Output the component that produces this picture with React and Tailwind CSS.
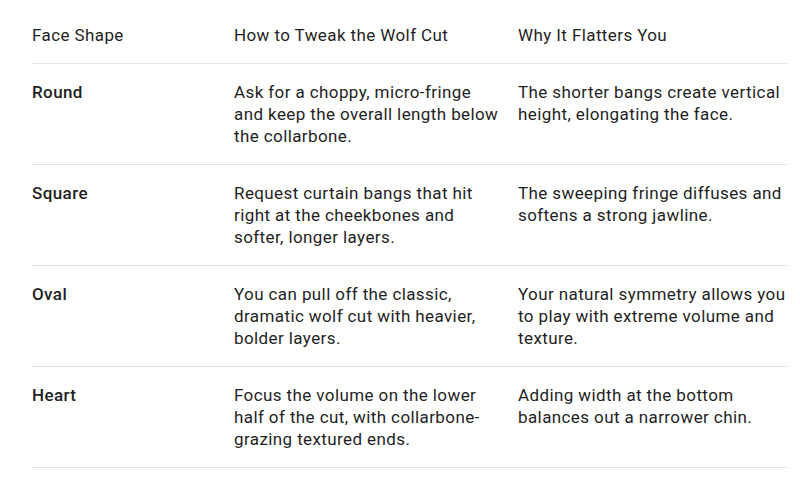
export default function App() {
  const rows = [
    ["Round", "Ask for a choppy, micro-fringe and keep the overall length below the collarbone.", "The shorter bangs create vertical height, elongating the face."],
    ["Square", "Request curtain bangs that hit right at the cheekbones and softer, longer layers.", "The sweeping fringe diffuses and softens a strong jawline."],
    ["Oval", "You can pull off the classic, dramatic wolf cut with heavier, bolder layers.", "Your natural symmetry allows you to play with extreme volume and texture."],
    ["Heart", "Focus the volume on the lower half of the cut, with collarbone-grazing textured ends.", "Adding width at the bottom balances out a narrower chin."],
  ];
  return (
    <div className="w-[800px] h-[481px] bg-white text-[#1f1f1f] text-[17px] leading-[22px] tracking-[0.4px]" style={{ fontFamily: "Roboto, 'Noto Sans', sans-serif" }}>
      <div className="ml-[32px] w-[755px] pt-[7px]">
        <div className="grid grid-cols-[202px_284px_1fr] border-b border-[#e3e3e3] py-[17px]">
          <div>Face Shape</div>
          <div>How to Tweak the Wolf Cut</div>
          <div>Why It Flatters You</div>
        </div>
        {rows.map((r) => (
          <div key={r[0]} className="grid grid-cols-[202px_284px_1fr] border-b border-[#e3e3e3] pt-[17px] pb-[17px] h-[101px]">
            <div className="font-medium">{r[0]}</div>
            <div className="pr-[15px]">{r[1]}</div>
            <div>{r[2]}</div>
          </div>
        ))}
      </div>
    </div>
  );
}
